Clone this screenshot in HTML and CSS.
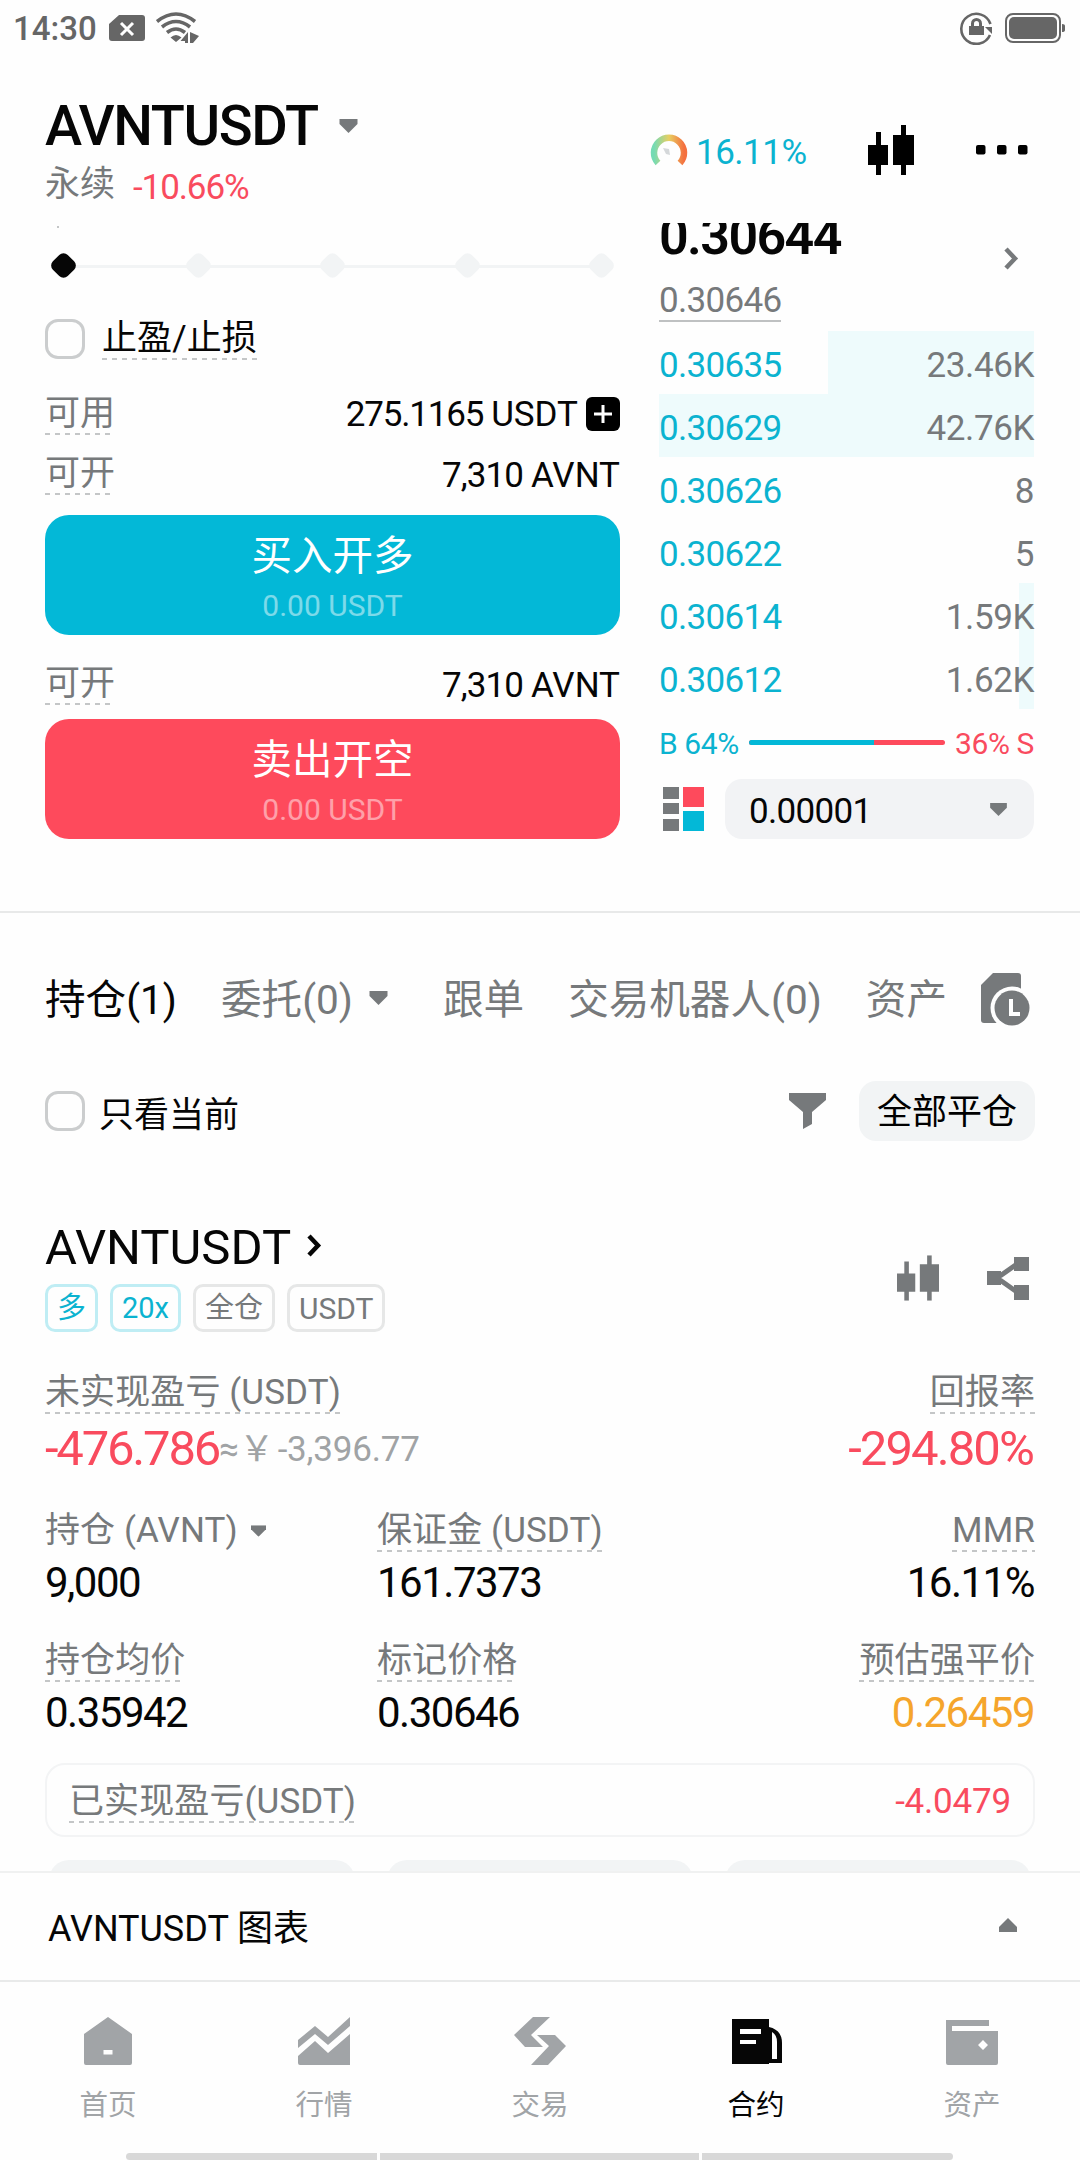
FILE: index.html
```html
<!DOCTYPE html>
<html lang="zh-CN">
<head>
  <meta charset="UTF-8">
  <meta name="viewport" content="width=device-width, initial-scale=1">
  <title>AVNTUSDT 永续</title>
  <link rel="stylesheet" href="styles.css">
</head>
<body>

  <!-- Shared icons -->
  <svg class="sprite">
    <symbol id="caret" viewBox="0 0 18 14"><path d="M0 0h18v5L9 14 0 5z"/></symbol>
    <symbol id="chevron" viewBox="0 0 15 23"><path d="M2 2l9 9.500-9 9.500" fill="none" stroke="currentColor" stroke-width="4.500"/></symbol>
    <symbol id="candles" viewBox="0 0 46 50"><path d="M8 7h5v13h7v20h-7v10H8V40H0V20h8zM33 0h5v10h8v30h-8v10h-5V40h-8V10h8z"/></symbol>
  </svg>

  <div class="status-bar">
    <span class="time">14:30</span>
    <svg class="sim" width="36" height="26" viewBox="0 0 36 26"><path d="M10 0h23q3 0 3 3v20q0 3-3 3H3q-3 0-3-3V9z" fill="#666"/><path d="M12 8l12 12M24 8L12 20" stroke="#fff" stroke-width="3"/></svg>
    <svg class="wifi" width="43" height="32" viewBox="0 0 43 32">
      <g fill="none" stroke="#666" stroke-width="3.600"><path d="M1 9.500Q20 -5.500 39 9.500"/><path d="M6 15Q20 4 34 15"/><path d="M11 20.500Q20 13.500 29 20.500"/></g>
      <path d="M14.500 25.500Q20 20.500 25.500 25.500L20 30zM24.500 29l7.500-9v11h-3v-2zM34 20l9 4-6 7h-3z" fill="#666"/>
    </svg>
    <span class="spacer"></span>
    <svg class="lock" width="33" height="33" viewBox="0 0 33 33">
      <path d="M30 23A15 15 0 1 1 30.500 12" fill="none" stroke="#666" stroke-width="2.600"/>
      <path d="M25 15h7v7z" fill="#666"/>
      <path d="M9 14h2v-2.500a5.500 5.500 0 0 1 11 0V14h2v9H9zM14 14h5v-2.500a2.500 2.500 0 0 0-5 0z" fill="#666" fill-rule="evenodd"/>
    </svg>
    <svg class="battery" width="61" height="30" viewBox="0 0 61 30"><rect x="1" y="1" width="54" height="28" rx="7" fill="none" stroke="#666" stroke-width="2"/><rect x="4" y="4" width="48" height="22" rx="5" fill="#666"/><path d="M57 11q3 0 3 2v4q0 2-3 2z" fill="#666"/></svg>
  </div>

  <header class="header">
    <div class="pair">
      <div class="pair-name">AVNTUSDT <svg class="caret" width="19" height="14"><use href="#caret"/></svg></div>
      <div class="pair-info"><span>永续</span><span class="num red">-10.66%</span></div>
    </div>
    <div class="header-tools">
      <svg width="38" height="32" viewBox="0 2 38 32">
        <defs><linearGradient id="gauge"><stop offset="0" stop-color="#74dbb4"/><stop offset=".5" stop-color="#e8cf62"/><stop offset="1" stop-color="#f4703f"/></linearGradient></defs>
        <path d="M8 31A15 15 0 1 1 30 31" fill="none" stroke="url(#gauge)" stroke-width="6.500"/>
        <path d="M13 16l6 1 1 6-4-1z" fill="#d5d8da"/>
      </svg>
      <span class="num margin-rate">16.11%</span>
      <svg class="chart-btn" width="46" height="50"><use href="#candles"/></svg>
      <svg class="more" width="52" height="10" viewBox="0 0 52 10"><rect width="9.500" height="9.500" rx="2"/><rect x="21" width="9.500" height="9.500" rx="2"/><rect x="42" width="9.500" height="9.500" rx="2"/></svg>
    </div>
  </header>

  <section class="trade">
    <div class="order-form">
      <div class="slider">
        <span class="knob active"></span><span class="knob"></span><span class="knob"></span><span class="knob"></span><span class="knob"></span>
      </div>
      <div class="tpsl"><span class="checkbox"></span><span class="dashed">止盈/止损</span></div>
      <div class="form-row avail">
        <span class="dashed gray">可用</span>
        <span class="amount"><span class="num">275.1165</span> USDT
          <svg width="34" height="34" viewBox="0 0 34 34"><rect width="34" height="34" rx="6"/><path d="M17 8v18M8 17h18" stroke="#fff" stroke-width="3"/></svg>
        </span>
      </div>
      <div class="form-row">
        <span class="dashed gray">可开</span>
        <span class="amount low"><span class="num">7,310</span> AVNT</span>
      </div>
      <button class="order-btn buy">买入开多<small>0.00 USDT</small></button>
      <div class="form-row second">
        <span class="dashed gray">可开</span>
        <span class="amount low"><span class="num">7,310</span> AVNT</span>
      </div>
      <button class="order-btn sell">卖出开空<small>0.00 USDT</small></button>
    </div>

    <div class="order-book">
      <div class="book-head">
        <div>
          <div class="last-price">0.30644</div>
          <div class="mark-price num">0.30646</div>
        </div>
        <svg class="book-more" width="15" height="23"><use href="#chevron"/></svg>
      </div>
      <div class="book-row num"><i style="width: 206px"></i><span>0.30635</span><span>23.46K</span></div>
      <div class="book-row num"><i style="width: 375px"></i><span>0.30629</span><span>42.76K</span></div>
      <div class="book-row num"><span>0.30626</span><span>8</span></div>
      <div class="book-row num"><span>0.30622</span><span>5</span></div>
      <div class="book-row num"><i style="width: 15px"></i><span>0.30614</span><span>1.59K</span></div>
      <div class="book-row num"><i style="width: 15px"></i><span>0.30612</span><span>1.62K</span></div>
      <div class="ratio">
        <span class="cyan">B 64%</span>
        <div class="ratio-bar"><div style="width: 64%"></div></div>
        <span class="red">36% S</span>
      </div>
      <div class="book-foot">
        <svg width="41" height="44" viewBox="0 0 41 44">
          <path d="M0 0h16v12H0zM0 16h16v11H0zM0 32h16v12H0z" fill="#76797b"/>
          <path d="M20 0h21v20H20z" fill="#fe4a5c"/><path d="M20 24h21v20H20z" fill="#03b8d7"/>
        </svg>
        <div class="select"><span class="num">0.00001</span><svg class="caret" width="19" height="13"><use href="#caret"/></svg></div>
      </div>
    </div>
  </section>

  <nav class="tabs">
    <span class="active">持仓(1)</span>
    <span class="with-caret">委托(0) <svg class="caret" width="19" height="14"><use href="#caret"/></svg></span>
    <span>跟单</span>
    <span>交易机器人(0)</span>
    <span>资产</span>
    <svg class="history" width="49" height="54" viewBox="0 0 49 54">
      <path d="M12 0h25q3 0 3 3v47H3q-3 0-3-3V12z" fill="#76797b"/>
      <circle cx="31" cy="35" r="21.500" fill="#fefefe"/>
      <circle cx="31" cy="35" r="17.500" fill="#76797b"/>
      <path d="M30 26v15h9" fill="none" stroke="#fff" stroke-width="4"/>
    </svg>
  </nav>

  <div class="filter-row">
    <span class="checkbox"></span><span class="filter-label">只看当前</span>
    <svg width="37" height="36" viewBox="0 0 37 36"><path d="M0 0h37v7L23 19v12l-9 5V19L0 7z" fill="#76797b"/></svg>
    <button class="close-all">全部平仓</button>
  </div>

  <section class="position">
    <div class="position-head">
      <div>
        <div class="position-name">AVNTUSDT <svg width="15" height="23"><use href="#chevron"/></svg></div>
        <div class="tags">
          <span class="tag cyan">多</span><span class="tag cyan">20x</span><span class="tag">全仓</span><span class="tag">USDT</span>
        </div>
      </div>
      <div class="position-tools">
        <svg width="42" height="46" viewBox="0 0 46 50"><use href="#candles" width="46" height="50"/></svg>
        <svg width="42" height="43" viewBox="0 0 42 43"><path d="M0 14h14v14H0zM27 0h15v14H27zM27 28h15v15H27z"/><path d="M13 19L30 7M13 23l17 12" stroke="#76797b" stroke-width="5"/></svg>
      </div>
    </div>

    <div class="pnl">
      <div>
        <span class="dashed gray">未实现盈亏 (USDT)</span>
        <div class="big-value red">-476.786<span class="approx">≈￥<span class="fiat">-3,396.77</span></span></div>
      </div>
      <div class="right">
        <span class="dashed gray">回报率</span>
        <div class="big-value red roi">-294.80%</div>
      </div>
    </div>

    <div class="stats">
      <div><span class="dashed none gray">持仓 (AVNT) <svg class="caret" width="15" height="12" viewBox="0 0 18 14"><use href="#caret" width="18" height="14"/></svg></span><div class="value">9,000</div></div>
      <div><span class="dashed gray">保证金 (USDT)</span><div class="value">161.7373</div></div>
      <div class="right"><span class="dashed gray">MMR</span><div class="value">16.11%</div></div>
    </div>
    <div class="stats">
      <div><span class="dashed gray">持仓均价</span><div class="value">0.35942</div></div>
      <div><span class="dashed gray">标记价格</span><div class="value">0.30646</div></div>
      <div class="right"><span class="dashed gray">预估强平价</span><div class="value orange">0.26459</div></div>
    </div>

    <div class="realized">
      <span class="dashed gray">已实现盈亏(USDT)</span>
      <span class="num red">-4.0479</span>
    </div>
    <div class="actions"><span></span><span></span><span></span></div>
  </section>

  <div class="chart-drawer">
    <span>AVNTUSDT 图表</span>
    <svg class="caret up" width="20" height="14" viewBox="0 0 18 14"><use href="#caret" width="18" height="14"/></svg>
  </div>

  <nav class="bottom-nav">
    <a><svg width="52" height="52" viewBox="0 0 52 52"><path d="M26 2L50 19v29q0 2-2 2H4q-2 0-2-2V19zM21.500 35v4.500h9V35z" fill-rule="evenodd"/></svg>首页</a>
    <a><svg width="52" height="52" viewBox="0 0 52 52"><path d="M0 25l17-14 13 11L52 2v9L30 30 17 19 0 33z"/><path d="M0 41l17-15 13 12 22-19v31H2q-2 0-2-2z"/></svg>行情</a>
    <a><svg width="52" height="52" viewBox="0 0 52 52"><path d="M19 2h17L17 20l12 12H11L0 20z"/><path d="M35 20h6l11 11-18 19H17l18-19-12-11z"/></svg>交易</a>
    <a class="active"><svg width="52" height="52" viewBox="0 0 52 52"><path d="M2 4h37v8q13 3 13 16v20H39v1H2zM42 17v27h5V27q0-7-5-10zM10 14v5h21v-5zM10 25v4h16v-4z" fill-rule="evenodd"/></svg>合约</a>
    <a><svg width="52" height="52" viewBox="0 0 52 52"><path d="M0 5h43v6H6v5h46v32q0 2-2 2H2q-2 0-2-2zM37 25l-5 5 5 5 5-5z" fill-rule="evenodd"/></svg>资产</a>
  </nav>
  <div class="home-bar"><span></span><span></span><span></span></div>

</body>
</html>
```

FILE: styles.css
```css
* {
  box-sizing: border-box;
  margin: 0;
  padding: 0;
}

body {
  width: 1080px;
  height: 2160px;
  overflow: hidden;
  background: #fefefe;
  color: #060606;
  font-family: Roboto, "Noto Sans CJK SC", sans-serif;
  font-size: 35px;
}

svg {
  display: block;
  flex: none;
}

.sprite {
  position: absolute;
  width: 0;
  height: 0;
}

button {
  border: none;
  font: inherit;
}

.num { letter-spacing: -.7px; }
.red { color: #f94b5e; }
.cyan { color: #0bb3d0; }
.gray { color: #76797b; }
.orange { color: #f5a52c; }
.caret { fill: #76797b; }
.right { text-align: right; }

/* label with dashed underline */
.dashed {
  display: inline-block;
  height: 42px;
  line-height: 42px;
  letter-spacing: .1px;
  white-space: nowrap;
  background: repeating-linear-gradient(90deg, #c4c6c7 0 5px, transparent 5px 10px) left bottom / 100% 2px no-repeat;
}

.dashed.none {
  display: inline-flex;
  align-items: center;
  gap: 13px;
  background: none;
}

.checkbox {
  width: 40px;
  height: 40px;
  flex: none;
  border: 3px solid #cbcdce;
  border-radius: 13px;
}

/* Status bar */
.status-bar {
  height: 56px;
  padding: 0 14px 0 13px;
  display: flex;
  align-items: center;
  color: #666;
}

.time {
  font-size: 33px;
  font-weight: 500;
  width: 96px;
}

.wifi { margin-left: 11px; }
.spacer { flex: 1; }
.battery { margin-left: 12px; }

/* Header */
.header {
  height: 167px;
  padding: 0 52px 0 45px;
  display: flex;
  justify-content: space-between;
}

.pair { padding-top: 37px; }

.pair-name {
  display: flex;
  align-items: center;
  gap: 21px;
  height: 66px;
  font-size: 56px;
  font-weight: 500;
  letter-spacing: -1.4px;
}

.pair-info {
  display: flex;
  gap: 18px;
  line-height: 54px;
  margin-top: -1px;
  color: #76797b;
}

.pair-info .num {
  padding-top: 3px;
  letter-spacing: -1.1px;
}

.header-tools {
  display: flex;
  align-items: center;
  height: 188px;
}

.margin-rate {
  width: 180px;
  padding: 4px 0 0 8px;
  letter-spacing: -.5px;
  color: #0bb3d0;
}

.chart-btn { margin-right: 62px; }

/* Order form and order book */
.trade {
  height: 690px;
  padding: 0 46px 0 45px;
  border-bottom: 2px solid #e8e9e9;
  display: flex;
  justify-content: space-between;
  overflow: hidden;
}

.order-form { width: 575px; }

.slider {
  position: relative;
  height: 85px;
  margin-bottom: 1px;
  padding: 0 8px;
  display: flex;
  align-items: center;
  justify-content: space-between;
  background: linear-gradient(#f2f4f5, #f2f4f5) 20px 42px / 540px 3px no-repeat;
}

/* tail of the value bubble scrolled under the header */
.slider::before {
  content: "";
  position: absolute;
  left: 12px;
  top: 3px;
  width: 2px;
  height: 2px;
  background: #c4c6c7;
}

.knob {
  width: 21px;
  height: 21px;
  border-radius: 6px;
  background: #f2f4f5;
  transform: rotate(45deg);
}

.knob.active { background: #060606; }

.tpsl {
  display: flex;
  align-items: center;
  gap: 17px;
  height: 60px;
}

.form-row {
  height: 60px;
  display: flex;
  justify-content: space-between;
  align-items: center;
}

.form-row.avail { margin-top: 15px; }
.form-row.second { margin-top: 19px; }

.amount {
  display: flex;
  align-items: center;
  gap: 8px;
}

.amount .num { letter-spacing: -1.2px; }
.amount.low { padding-top: 3px; }
.amount.low .num { letter-spacing: -.9px; }

.order-btn {
  width: 575px;
  height: 120px;
  border-radius: 24px;
  color: #fff;
  font-size: 40.5px;
  line-height: 50px;
  padding-top: 12px;
}

.order-btn small {
  display: block;
  font-size: 30px;
  opacity: .48;
}

.buy {
  margin-top: 11px;
  background: #03b8d7;
}

.sell {
  margin-top: 5px;
  background: #fe4a5c;
}

.order-book { width: 375px; }

.book-head {
  height: 108px;
  display: flex;
  justify-content: space-between;
}

.last-price {
  font-size: 52px;
  font-weight: 600;
  letter-spacing: -1.6px;
  line-height: 27px;
}

.mark-price {
  display: inline-block;
  margin-top: 26px;
  height: 46px;
  line-height: 49px;
  color: #76797b;
  border-bottom: 2px solid #bfc1c2;
}

.book-more {
  margin: 24px 15px 0 0;
  color: #76797b;
}

.book-row {
  position: relative;
  height: 63px;
  padding-top: 5px;
  display: flex;
  justify-content: space-between;
  align-items: center;
  color: #76797b;
}

.book-row span { position: relative; }
.book-row span:nth-last-child(2) { color: #0bb3d0; }
.book-row span:last-child { letter-spacing: -.4px; }

.book-row i {
  position: absolute;
  top: 0;
  right: 0;
  height: 100%;
  background: #eefbfc;
}

.ratio {
  height: 66px;
  display: flex;
  align-items: center;
  gap: 10px;
  font-size: 30px;
  letter-spacing: -.4px;
}

.ratio span { padding-top: 2px; }

.ratio-bar {
  flex: 1;
  height: 5px;
  border-radius: 3px;
  background: #fe4a5c;
  overflow: hidden;
}

.ratio-bar div {
  height: 100%;
  background: #03b8d7;
}

.book-foot {
  margin-top: 4px;
  display: flex;
  align-items: center;
  justify-content: space-between;
  padding-left: 4px;
}

.select {
  width: 309px;
  height: 60px;
  padding: 0 26px 0 24px;
  border-radius: 17px;
  background: #f2f3f5;
  display: flex;
  align-items: center;
  justify-content: space-between;
}

.select .num { padding-top: 4px; }

/* Tabs */
.tabs {
  height: 110px;
  margin: 32px 0 0 45px;
  display: flex;
  align-items: center;
  gap: 44px;
  font-size: 40.6px;
  color: #76797b;
}

.tabs span {
  display: flex;
  align-items: center;
  gap: 16px;
  padding-bottom: 8px;
}

.tabs .caret { margin-top: 3px; }
.tabs .active { color: #060606; }
.tabs .with-caret { margin-right: 11px; }
.history { margin-left: -10px; }

.filter-row {
  margin: 26px 45px 0;
  height: 60px;
  display: flex;
  align-items: center;
}

.filter-label {
  flex: 1;
  margin-left: 14px;
}

.close-all {
  width: 176px;
  height: 60px;
  padding-bottom: 5px;
  margin-left: 33px;
  border-radius: 17px;
  background: #f2f4f5;
}

/* Position card */
.position {
  margin: 76px 45px 0;
}

.position-head {
  height: 115px;
  display: flex;
  justify-content: space-between;
}

.position-name {
  height: 60px;
  display: flex;
  align-items: center;
  gap: 16px;
  font-size: 49px;
}

.position-name svg { margin-bottom: 3px; }

.tags {
  display: flex;
  gap: 12px;
  margin-top: 7px;
}

.tag {
  height: 48px;
  line-height: 43px;
  padding: 0 9px;
  border: 3px solid #e6e7e7;
  border-radius: 10px;
  font-size: 29px;
  color: #76797b;
}

.tag.cyan {
  color: #0bb3d0;
  border-color: #bfedf4;
}

.tag:last-child { font-size: 30px; }

.position-tools {
  display: flex;
  align-items: center;
  gap: 48px;
  height: 122px;
  margin-right: 6px;
  fill: #76797b;
}

.pnl {
  margin-top: 40px;
  display: flex;
  justify-content: space-between;
}

.pnl .dashed,
.stats .dashed { vertical-align: top; }

.big-value {
  margin-top: 4px;
  height: 60px;
  line-height: 62px;
  font-size: 49px;
  letter-spacing: -2.2px;
}

.roi {
  letter-spacing: -1.9px;
  padding-right: 2px;
}

.approx {
  font-size: 35px;
  letter-spacing: .4px;
  vertical-align: 4px;
  line-height: 1;
  color: #a0a3a5;
}

.fiat {
  margin-left: 3px;
  letter-spacing: -.2px;
}

.stats {
  margin-top: 28px;
  display: grid;
  grid-template-columns: 332px 1fr 1fr;
}

.pnl + .stats { margin-top: 32px; }

.value {
  height: 60px;
  line-height: 62px;
  font-size: 42px;
  letter-spacing: -1.5px;
}

.right .value { padding-right: 1px; }

.realized {
  margin-top: 21px;
  height: 74px;
  padding: 3px 22px 0;
  border: 2px solid #f3f4f5;
  border-radius: 20px;
  display: flex;
  align-items: center;
  justify-content: space-between;
}

.realized .num { letter-spacing: -.2px; }

/* only the top edge shows above the drawer */
.actions {
  margin-top: 23px;
  height: 11px;
  padding: 0 4px;
  overflow: hidden;
  display: flex;
  justify-content: space-between;
}

.actions span {
  width: 306px;
  height: 60px;
  border-radius: 20px;
  background: #f2f4f5;
}

.chart-drawer {
  height: 109px;
  padding: 0 62px 4px 48px;
  border-top: 2px solid #f0f1f1;
  display: flex;
  align-items: center;
  justify-content: space-between;
  font-size: 36px;
}

.up { transform: rotate(180deg); }

/* Bottom navigation */
.bottom-nav {
  height: 173px;
  border-top: 2px solid #e9eaea;
  display: flex;
}

.bottom-nav a {
  flex: 1;
  display: flex;
  flex-direction: column;
  align-items: center;
  padding-top: 33px;
  font-size: 28.5px;
  line-height: 40px;
  color: #a1a4a7;
  fill: #a1a4a7;
}

.bottom-nav svg { margin-bottom: 19px; }

.bottom-nav .active {
  color: #060606;
  fill: #060606;
}

.home-bar {
  display: flex;
  gap: 3px;
  height: 7px;
  padding: 0 127px 0 126px;
}

.home-bar span {
  flex: 251;
  background: #d8d8d8;
}

.home-bar span:nth-child(2) { flex: 320; }
.home-bar span:first-child { border-radius: 4px 0 0 4px; }
.home-bar span:last-child { border-radius: 0 4px 4px 0; }
```
